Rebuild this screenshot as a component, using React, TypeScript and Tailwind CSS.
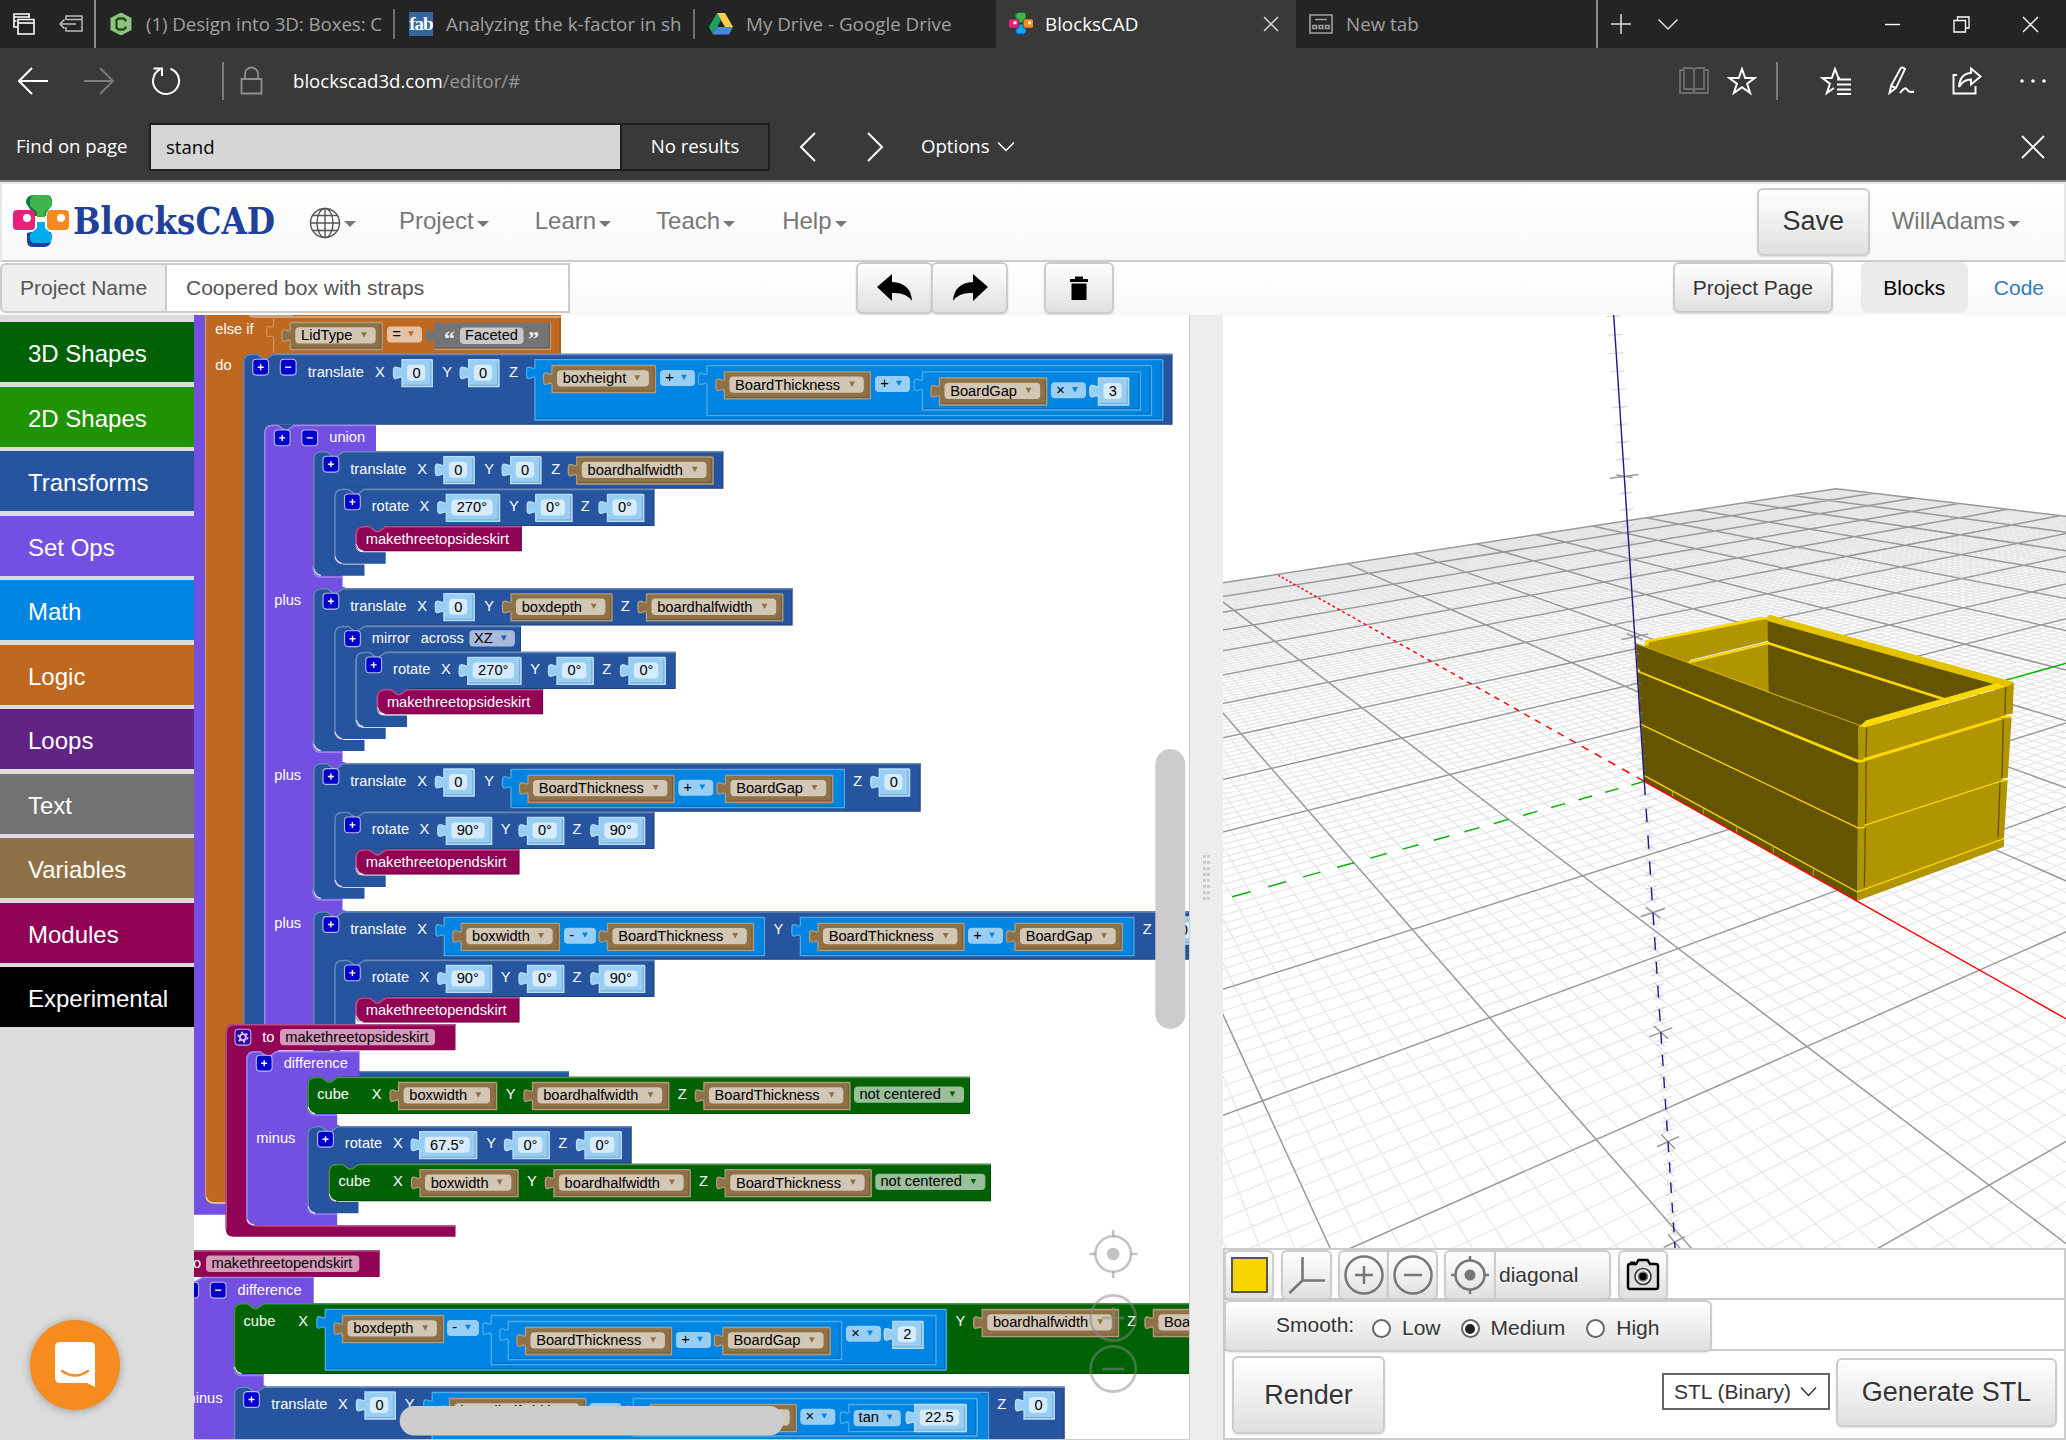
import React from "react";

/* ---------- colours of the block categories ---------- */
const C = {
  green: "#006205",
  blue: "#26549e",
  purple: "#7450e2",
  math: "#0185e3",
  logic: "#bf6920",
  brown: "#8e7147",
  module: "#900355",
  num: "#99cef4",
};
const HI: Record<string, string> = {
  [C.green]: "#4d914f",
  [C.blue]: "#6787bb",
  [C.purple]: "#9d85eb",
  [C.math]: "#4daaeb",
  [C.logic]: "#d39663",
  [C.brown]: "#b09b7e",
  [C.module]: "#b14f88",
  [C.num]: "#b8ddf7",
};
const F = "'Liberation Sans', Arial, sans-serif";

/* ---------- block primitives ---------- */
const T = ({ x, y, t, dark, size = 14.67 }: { x: number; y: number; t: string; dark?: boolean; size?: number }) => (
  <text x={x} y={y} fontSize={size} fontFamily={F} fill={dark ? "#000" : "#fff"}>
    {t}
  </text>
);

const Arrow = ({ x, y, c }: { x: number; y: number; c: string }) => (
  <path d={`M${x - 2.9} ${y - 2.6}h5.8l-2.9 5.4z`} fill={c} />
);

const Stack = ({
  x, y, r, hb, c, tab, foot, fr, col = 21.3,
}: {
  x: number; y: number; r: number; hb: number; c: string; tab?: string;
  foot?: [number, number]; fr?: number; col?: number;
}) => {
  const cr = x + col;
  const lower = foot
    ? `V${hb}H${cr + 8}q-8 0 -8 8V${foot[0] - 8}q0 8 8 8H${fr}V${foot[1]}H${x + 8}q-8 0 -8 -8`
    : `V${hb}H${x + 8}q-8 0 -8 -8`;
  const end = foot ? foot[1] : hb;
  const notch = `H${x + 14}l6.5 4.6h3l6.5 -4.6`;
  return (
    <g>
      {tab && <path d={`M${x} ${y + 8}V${y - 1}H${x + 32}V${y + 5}H${x + 8}z`} fill={tab} />}
      <path d={`M${x} ${y + 8}q0 -8 8 -8${notch}H${r}${lower}V${y + 8}z`} fill={c} />
      <path
        d={`M${x + 0.8} ${end - 7}V${y + 8}q0 -7.2 8 -7.2${notch}H${r}`}
        fill="none" stroke={HI[c]} strokeWidth={1.5}
      />
      <path d={`M${r - 0.5} ${y + 1}V${hb - 0.5}H${foot ? cr + 8 : x + 8}`} fill="none" stroke="#000" strokeOpacity={0.22} />
      <path d={`M${x + 0.8} ${end - 7}q1.500 6 7 6.700`} fill="none" stroke="#fff" strokeOpacity={0.85} strokeWidth={1.3} />
    </g>
  );
};

const Val = ({ x, y, r, b, c, ty = 5 }: { x: number; y: number; r: number; b: number; c: string; ty?: number }) => (
  <g>
    <path
      d={`M${x} ${y}H${r}V${b}H${x}V${y + ty + 14}c-1 -5 -8.5 5 -8.5 -4v-4c0 -8 7.5 0 8.5 -3z`}
      fill={c}
    />
    <path
      d={`M${r} ${y}V${b}H${x}V${y + ty + 14}c-1 -5 -8.5 5 -8.5 -4v-4c0 -8 7.5 0 8.5 -3V${y}H${r}`}
      fill="none" stroke={HI[c]} strokeWidth={1.3}
    />
    <path d={`M${r - 1.5} ${y + 2}V${b - 1.5}H${x + 1}`} fill="none" stroke="#000" strokeOpacity={0.18} />
  </g>
);

const Pill = ({ x, y, w, c, h = 16.3 }: { x: number; y: number; w: number; c: string; h?: number }) => (
  <rect x={x} y={y} width={w} height={h} rx={4} fill={c} />
);

const VAR_W: Record<string, number> = {
  LidType: 92, boxheight: 103.5, BoardThickness: 146, BoardGap: 107.3,
  boardhalfwidth: 136.3, boxdepth: 101, boxwidth: 98,
};
const Var = ({ x, y, n }: { x: number; y: number; n: string }) => {
  const w = VAR_W[n];
  return (
    <g>
      <Val x={x} y={y} r={x + w} b={y + 27} c={C.brown} />
      <Pill x={x + 5} y={y + 4.7} w={w - 11.6} c="#d2c6b5" />
      <T x={x + 10.7} y={y + 17.8} t={n} dark />
      <Arrow x={x + w - 18.3} y={y + 12.4} c={C.brown} />
    </g>
  );
};

const NUM_W: Record<string, number> = { "0": 30.3, "2": 30.3, "3": 30.3, "0°": 36.3, "90°": 45.4, "270°": 53.3, "67.5°": 57, "22.5": 51.5 };
const Num = ({ x, y, v }: { x: number; y: number; v: string }) => (
  <g>
    <Val x={x} y={y} r={x + NUM_W[v]} b={y + 27} c={C.num} />
    <Pill x={x + 5} y={y + 5} w={NUM_W[v] - 12} c="#d6ebfb" h={16} />
    <T x={x + 10.4} y={y + 17.9} t={v} dark />
  </g>
);

const Op = ({ x, y, o, c = C.math, bg = "#99cef4" }: { x: number; y: number; o: string; c?: string; bg?: string }) => {
  const w = o === "-" ? 32 : 35;
  return (
    <g>
      <Pill x={x} y={y} w={w} c={bg} h={16} />
      <T x={x + 5.2} y={y + 12.2} t={o} dark />
      <Arrow x={x + w - 11} y={y + 7.3} c={c} />
    </g>
  );
};

const Btn = ({ x, y, s = "+" }: { x: number; y: number; s?: string }) => (
  <g>
    <rect x={x + 0.3} y={y + 0.3} width={15.8} height={15.8} rx={3.5} fill={s === "*" ? "#3300a8" : "#0000cc"} stroke="#b8b8ea" strokeWidth={1.1} />
    {s === "*" ? (
      <g stroke="#d8c8ee" fill="none">
        <circle cx={x + 8.2} cy={y + 8.2} r={3} strokeWidth={1.8} />
        <circle cx={x + 8.2} cy={y + 8.2} r={4.8} strokeWidth={1.6} strokeDasharray="2.2 2.83" />
      </g>
    ) : (
      <path d={`M${x + 5.2} ${y + 8.2}h6${s === "+" ? `M${x + 8.2} ${y + 5.2}v6` : ""}`} stroke="#fff" strokeWidth={1.4} />
    )}
  </g>
);

const Rotate = ({ x, y, a }: { x: number; y: number; a: [number, string][] }) => (
  <g>
    <Btn x={x + 10} y={y + 5} />
    <T x={x + 37.5} y={y + 22.2} t="rotate" />
    {a.map(([nx, v], i) => (
      <g key={i}>
        <T x={nx - 26.7} y={y + 22.2} t={"XYZ"[i]} />
        <Num x={nx} y={y + 5.7} v={v} />
      </g>
    ))}
  </g>
);

const Call = ({ x, y, n, w }: { x: number; y: number; n: string; w: number }) => (
  <g>
    <Stack x={x} y={y} r={x + w} hb={y + 25.3} c={C.module} tab={C.blue} />
    <T x={x + 10.2} y={y + 18} t={n} />
  </g>
);

const Workspace = () => (
  <svg className="block h-full w-full" viewBox="194 315 996 1125">
    {/* outer if / else-if block */}
    <path d="M194 315H240V1214.700H194z" fill={C.purple} />
    <path d="M205 315H561V353.700H243V1203.500H213q-8 0 -8 -8z" fill={C.logic} />
    <path d="M205.600 315V1196" stroke={HI[C.logic]} strokeWidth={1.3} />
    <path d="M206 1197q2 5.500 7 6H226" stroke="#fff" strokeOpacity={0.7} strokeWidth={1.4} fill="none" />
    <path d="M560 316V353" stroke="#94501a" />
    <path d="M249 315.500q2 1.500 6 1.500H561" stroke="#e2b48b" strokeWidth={1.3} fill="none" />
    <path d="M251 315.500H293" stroke="#a9a2b4" strokeWidth={1} />
    <path d="M273.600 317V325q-1 3 -4 1.500q-3 -1 -3 4v2q0 5 3 4q3 -1 4 1V353" stroke={HI[C.logic]} strokeWidth={1.2} fill="none" />
    <T x={215.3} y={334} t="else if" />
    <T x={215.3} y={370.3} t="do" />
    <Var x={290.3} y={322.5} n="LidType" />
    <Op x={387} y={326.5} o="=" c={C.logic} bg="#e5c3a6" />
    <Val x={434} y={322.5} r={550.6} b={349.3} c="#747474" />
    <path d="M550.600 322.500V349.300H434" fill="none" stroke="#d39663" strokeWidth={1.2} />
    <Pill x={460} y={327.6} w={63.5} c="#c8c8c8" />
    <T x={465} y={340.1} t="Faceted" dark />
    <text x={444} y={346} fontSize={22} fontFamily="'Liberation Serif', serif" fontWeight="bold" fill="#eee">“</text>
    <text x={528} y={346} fontSize={22} fontFamily="'Liberation Serif', serif" fontWeight="bold" fill="#eee">”</text>

    {/* outer translate */}
    <Stack x={243} y={353.7} r={1172.5} hb={424.7} c={C.blue} tab={C.logic} foot={[1090, 1100]} fr={300} />
    <Btn x={252.5} y={359} />
    <Btn x={280} y={359} s="-" />
    <T x={307.7} y={376.5} t="translate" />
    <T x={375} y={376.5} t="X" />
    <Num x={402} y={359.7} v="0" />
    <T x={442.3} y={376.5} t="Y" />
    <Num x={468.7} y={359.7} v="0" />
    <T x={509} y={376.5} t="Z" />
    <Val x={535} y={359.7} r={1162.8} b={420} c={C.math} />
    <Var x={552} y={365.5} n="boxheight" />
    <Op x={660} y={370} o="+" />
    <Val x={707} y={365.7} r={1151.5} b={415.3} c={C.math} />
    <Var x={724.4} y={371.8} n="BoardThickness" />
    <Op x={875} y={376} o="+" />
    <Val x={922.5} y={371.8} r={1140.5} b={410} c={C.math} />
    <Var x={939.5} y={378} n="BoardGap" />
    <Op x={1051} y={382.3} o="×" />
    <Num x={1098.4} y={378} v="3" />

    {/* union */}
    <path d="M264 433V424.700H296V430H278L272 426z" fill={C.blue} />
    <path d="M264 1030V433q0 -8.300 8 -8.300H278l6.500 4.600h3l6.500 -4.600H376V451H342.500V1030H264z" fill={C.purple} />
    <path d="M264.800 1030V433q0 -7.500 8 -7.500H278l6.500 4.600h3l6.500 -4.600H376" fill="none" stroke={HI[C.purple]} strokeWidth={1.5} />
    <Btn x={274} y={429.7} />
    <Btn x={301.5} y={429.7} s="-" />
    <T x={329.3} y={442} t="union" />
    {[576.3, 751.4, 899.3].map((y) => (
      <path key={y} d={`M313 ${y - 10}q0 10.800 8 10.800H342.500`} fill="none" stroke={HI[C.purple]} strokeWidth={1.5} />
    ))}

    {/* union child 1 */}
    <Stack x={313} y={451} r={723.4} hb={488.7} c={C.blue} tab={C.purple} foot={[564.5, 575.7]} fr={364.5} />
    <Btn x={322.7} y={456} />
    <T x={350.3} y={473.6} t="translate" />
    <T x={417.3} y={473.6} t="X" />
    <Num x={443.9} y={456.7} v="0" />
    <T x={484.3} y={473.6} t="Y" />
    <Num x={510.7} y={456.7} v="0" />
    <T x={551.3} y={473.6} t="Z" />
    <Var x={576.8} y={457} n="boardhalfwidth" />
    <Stack x={334.2} y={488.7} r={654.5} hb={526} c={C.blue} tab={C.blue} foot={[552.3, 563.7]} fr={385.7} />
    <Rotate x={334.2} y={488.7} a={[[446.3, "270°"], [535.7, "0°"], [607.5, "0°"]]} />
    <Call x={355.5} y={526} n="makethreetopsideskirt" w={166.4} />

    {/* union child 2 */}
    <T x={274.3} y={605} t="plus" />
    <Stack x={313} y={587.9} r={792.6} hb={625.6} c={C.blue} tab={C.purple} foot={[740, 751]} fr={364.5} />
    <Btn x={322.7} y={593} />
    <T x={350.3} y={610.5} t="translate" />
    <T x={417.3} y={610.5} t="X" />
    <Num x={443.9} y={593.7} v="0" />
    <T x={484.3} y={610.5} t="Y" />
    <Var x={511} y={593.9} n="boxdepth" />
    <T x={620.7} y={610.5} t="Z" />
    <Var x={646.5} y={593.9} n="boardhalfwidth" />
    <Stack x={334.2} y={625.6} r={521} hb={651.7} c={C.blue} tab={C.blue} foot={[727.8, 739]} fr={385.7} />
    <Btn x={344.3} y={630.5} />
    <T x={371.7} y={643} t="mirror" />
    <T x={420.7} y={643} t="across" />
    <Pill x={469.4} y={630.3} w={45.5} c="#a8badb" />
    <T x={474} y={643} t="XZ" dark />
    <Arrow x={503.8} y={638} c={C.blue} />
    <Stack x={355.5} y={651.7} r={675.7} hb={689} c={C.blue} tab={C.blue} foot={[715.5, 727]} fr={407} />
    <Rotate x={355.5} y={651.7} a={[[467.7, "270°"], [557, "0°"], [629, "0°"]]} />
    <Call x={376.7} y={689} n="makethreetopsideskirt" w={166.4} />

    {/* union child 3 */}
    <T x={274.3} y={780} t="plus" />
    <Stack x={313} y={763} r={920.7} hb={811.7} c={C.blue} tab={C.purple} foot={[887.7, 898.7]} fr={364.5} />
    <Btn x={322.7} y={768.3} />
    <T x={350.3} y={785.7} t="translate" />
    <T x={417.3} y={785.7} t="X" />
    <Num x={443.9} y={769} v="0" />
    <T x={484.3} y={785.7} t="Y" />
    <Val x={511} y={769.3} r={844.3} b={807.7} c={C.math} />
    <Var x={528} y={775.3} n="BoardThickness" />
    <Op x={678.3} y={779.7} o="+" />
    <Var x={725.5} y={775.3} n="BoardGap" />
    <T x={853.2} y={785.7} t="Z" />
    <Num x={879.3} y={769} v="0" />
    <Stack x={334.2} y={811.7} r={654.5} hb={849} c={C.blue} tab={C.blue} foot={[875.5, 887]} fr={385.7} />
    <Rotate x={334.2} y={811.7} a={[[446.3, "90°"], [527.5, "0°"], [599.3, "90°"]]} />
    <Call x={355.5} y={849.3} n="makethreetopendskirt" w={164} />

    {/* union child 4 */}
    <T x={274.3} y={928} t="plus" />
    <Stack x={313} y={911.3} r={1240} hb={959.7} c={C.blue} tab={C.purple} foot={[1050, 1060]} fr={330} />
    <Btn x={322.7} y={916.3} />
    <T x={350.3} y={933.9} t="translate" />
    <T x={417.3} y={933.9} t="X" />
    <Val x={444.3} y={917.3} r={764.4} b={955.7} c={C.math} />
    <Var x={461.3} y={923.3} n="boxwidth" />
    <Op x={564} y={927.7} o="-" />
    <Var x={607.5} y={923.3} n="BoardThickness" />
    <T x={773.5} y={933.9} t="Y" />
    <Val x={800.4} y={917.3} r={1133.9} b={955.7} c={C.math} />
    <Var x={818} y={923.3} n="BoardThickness" />
    <Op x={968} y={927.7} o="+" />
    <Var x={1015} y={923.3} n="BoardGap" />
    <T x={1142.7} y={933.9} t="Z" />
    <Num x={1169.4} y={917} v="0" />
    <Stack x={334.2} y={959.7} r={654.5} hb={997} c={C.blue} tab={C.blue} foot={[1050, 1060]} fr={340} />
    <Rotate x={334.2} y={959.7} a={[[446.3, "90°"], [527.5, "0°"], [599.3, "90°"]]} />
    <Call x={355.5} y={997.3} n="makethreetopendskirt" w={164} />
    <path d="M340 1071H569V1078H340z" fill={C.blue} />
    <path d="M340 1071.600H569" stroke={HI[C.blue]} strokeWidth={1.3} />

    {/* module definition 1 */}
    <path d="M225.700 1032q0 -8 8 -8H455.500V1050.300H246.500V1225.500H455.500V1236.700H233.700q-8 0 -8 -8z" fill={C.module} />
    <path d="M226.300 1229V1032q0 -7.300 8 -7.300H455.500" fill="none" stroke={HI[C.module]} strokeWidth={1.5} />
    <Btn x={234.7} y={1029} s="*" />
    <T x={262.3} y={1042.3} t="to" />
    <Pill x={280} y={1029} w={155} c="#d39abb" />
    <T x={285.2} y={1042.3} t="makethreetopsideskirt" dark />
    <path d="M246.200 1050H278V1056H262L246.200 1062z" fill={C.module} />
    <path d="M246 1213V1226H262z" fill={C.module} />
    <path d="M246.200 1059q0 -8 8 -8H260.200l6.500 4.600h3l6.500 -4.600H359.500V1076.500H337.200V1225.500H254.200q-8 0 -8 -8z" fill={C.purple} />
    <path d="M247 1218V1059q0 -7.300 8 -7.300H260.200l6.500 4.600h3l6.500 -4.600H359.500" fill="none" stroke={HI[C.purple]} strokeWidth={1.5} />
    <path d="M254 1226H455.500" stroke={HI[C.module]} strokeWidth={1.3} />
    <path d="M247 1219q1.500 5.500 7 6" fill="none" stroke="#fff" strokeOpacity={0.85} strokeWidth={1.3} />
    <Btn x={256} y={1055} />
    <T x={283.7} y={1068.3} t="difference" />
    <path d="M307.300 1105q0 10.200 8 10.200H337M307.300 1203q0 11 8 11H337" fill="none" stroke={HI[C.purple]} strokeWidth={1.5} />
    <Stack x={307.3} y={1076.7} r={970} hb={1114} c={C.green} tab={C.purple} />
    <T x={317.2} y={1098.9} t="cube" />
    <T x={371.8} y={1098.9} t="X" />
    <Var x={398.6} y={1082.5} n="boxwidth" />
    <T x={505.7} y={1098.9} t="Y" />
    <Var x={532.5} y={1082.5} n="boardhalfwidth" />
    <T x={677.7} y={1098.9} t="Z" />
    <Var x={703.9} y={1082.5} n="BoardThickness" />
    <Pill x={854} y={1086.5} w={110} c="#99bf9b" />
    <T x={859.4} y={1099} t="not centered" dark />
    <Arrow x={952.4} y={1094} c={C.green} />
    <T x={256.3} y={1143} t="minus" />
    <Stack x={307.3} y={1126} r={631.7} hb={1163.7} c={C.blue} tab={C.purple} foot={[1202, 1213.3]} fr={358.5} />
    <Rotate x={307.3} y={1126} a={[[419.7, "67.5°"], [513, "0°"], [585, "0°"]]} />
    <Stack x={328.5} y={1163.7} r={991} hb={1201.3} c={C.green} tab={C.blue} />
    <T x={338.5} y={1186.2} t="cube" />
    <T x={393} y={1186.2} t="X" />
    <Var x={420} y={1169.7} n="boxwidth" />
    <T x={527} y={1186.2} t="Y" />
    <Var x={553.9} y={1169.7} n="boardhalfwidth" />
    <T x={699} y={1186.2} t="Z" />
    <Var x={725.2} y={1169.7} n="BoardThickness" />
    <Pill x={875.3} y={1173.7} w={110} c="#99bf9b" />
    <T x={880.4} y={1186.3} t="not centered" dark />
    <Arrow x={973.4} y={1181.5} c={C.green} />

    {/* module definition 2 */}
    <path d="M194 1250.300H379.700V1277H194z" fill={C.module} />
    <path d="M194 1251H379.700" stroke={HI[C.module]} strokeWidth={1.5} />
    <T x={188.9} y={1268.3} t="to" />
    <Pill x={206} y={1255.6} w={153.3} c="#d39abb" />
    <T x={211.5} y={1268.3} t="makethreetopendskirt" dark />
    <path d="M194 1281h2l6.500 -4H313.700V1303H263.700V1440H194z" fill={C.purple} />
    <path d="M194 1281.500h2l6.500 -4H313.700" stroke={HI[C.purple]} strokeWidth={1.5} fill="none" />
    <Btn x={182.5} y={1282} />
    <Btn x={210} y={1282} s="-" />
    <T x={237.5} y={1295} t="difference" />
    <path d="M233.700 1364q0 11.500 8 11.500H263.700" fill="none" stroke={HI[C.purple]} strokeWidth={1.5} />
    <Stack x={233.7} y={1303} r={1240} hb={1374} c={C.green} tab={C.purple} />
    <T x={243.5} y={1325.9} t="cube" />
    <T x={298.2} y={1325.9} t="X" />
    <Val x={325.3} y={1309.3} r={946.2} b={1370} c={C.math} />
    <Var x={342.5} y={1315.5} n="boxdepth" />
    <Op x={447} y={1320} o="-" />
    <Val x={491.3} y={1315.5} r={935.9} b={1364.7} c={C.math} />
    <Val x={508.3} y={1321.5} r={841.5} b={1359.7} c={C.math} />
    <Var x={525.5} y={1327.5} n="BoardThickness" />
    <Op x={676} y={1332} o="+" />
    <Var x={722.9} y={1327.5} n="BoardGap" />
    <Op x={846} y={1325.7} o="×" />
    <Num x={892.8} y={1321.3} v="2" />
    <T x={955.6} y={1325.9} t="Y" />
    <Var x={982.2} y={1309.5} n="boardhalfwidth" />
    <T x={1127.2} y={1325.9} t="Z" />
    <Var x={1153.4} y={1309.5} n="BoardThickness" />
    <T x={183.5} y={1403.3} t="minus" />
    <Stack x={233.7} y={1386.5} r={1064.7} hb={1460} c={C.blue} tab={C.purple} />
    <Btn x={243.3} y={1391.3} />
    <T x={271.2} y={1408.9} t="translate" />
    <T x={338} y={1408.9} t="X" />
    <Num x={365} y={1392} v="0" />
    <T x={404.7} y={1408.9} t="Y" />
    <Val x={432.2} y={1392.5} r={979.5} b={1450} c={C.math} />
    <Var x={449.5} y={1398.5} n="boardhalfwidth" />
    <Op x={589.3} y={1403} o="-" />
    <Val x={633.3} y={1398.5} r={977.2} b={1436} c={C.math} />
    <path d="M979 1394H987.500V1440H979z" fill={C.math} />
    <path d="M979 1392.500H988.500V1440" fill="none" stroke={HI[C.math]} strokeWidth={1.3} />
    <path d="M979.500 1399V1440" stroke={C.math} strokeWidth={2} />
    <path d="M977.200 1398.500V1436" stroke={HI[C.math]} strokeWidth={1.3} />
    <Var x={650.3} y={1404.5} n="BoardThickness" />
    <Op x={800.3} y={1408.7} o="×" />
    <Val x={848.8} y={1404.5} r={966.3} b={1431.5} c={C.math} />
    <Pill x={853.6} y={1410} w={47.2} c="#99cef4" />
    <T x={858.6} y={1422.3} t="tan" dark />
    <Arrow x={889.7} y={1417} c={C.math} />
    <Num x={914.7} y={1404.5} v="22.5" />
    <T x={997.3} y={1408.9} t="Z" />
    <Num x={1024} y={1392} v="0" />

    {/* zoom controls */}
    <g stroke="#888" strokeOpacity={0.5} strokeWidth={2.6} fill="none">
      <circle cx={1113.2} cy={1254} r={17.8} />
      <circle cx={1113.2} cy={1254} r={6.3} fill="#888" fillOpacity={0.5} stroke="none" />
      <path d="M1113.200 1230v6.500M1113.200 1271.500v6.500M1089.500 1254h6M1131 1254h6.500" />
      <circle cx={1113.2} cy={1318} r={22.6} />
      <path d="M1102 1318h22.500M1113.200 1307v22" />
      <circle cx={1113.2} cy={1369} r={22.6} />
      <path d="M1102 1369h22.500" />
    </g>

    {/* scrollbars */}
    <rect x={1155.3} y={749} width={30} height={280} rx={15} fill="#ccc" />
    <rect x={399.7} y={1406} width={384} height={29.5} rx={14.7} fill="#ccc" />
    <path d="M1189.500 315V1439.500H194" stroke="#ccc" fill="none" />
  </svg>
);

/* ---------- 3D viewer ---------- */
/* camera: homogeneous projection of model units to view pixels */
const wOf = (X: number, Y: number, Z: number) => 1 - 0.01066595 * X + 0.00613036 * Y - 0.00488548 * Z;
const proj = (X: number, Y: number, Z = 0): [number, number] => {
  const w = wOf(X, Y, Z);
  return [
    1644.6 + (7.60142 * X + 12.73622 * Y - 0.90383 * Z - 0.261) / w,
    783 + (4.29441 * X - 3.57568 * Y - 13.75832 * Z - 1.6) / w,
  ];
};
const NEAR = 0.08;
const seg = (a: [number, number], b: [number, number]) => {
  const wa = wOf(a[0], a[1], 0), wb = wOf(b[0], b[1], 0);
  if (wa < NEAR && wb < NEAR) return "";
  if (wa < NEAR || wb < NEAR) {
    const t = (NEAR - wa) / (wb - wa);
    const cut: [number, number] = [a[0] + (b[0] - a[0]) * t, a[1] + (b[1] - a[1]) * t];
    if (wa < NEAR) a = cut;
    else b = cut;
  }
  const p = proj(a[0], a[1]), q = proj(b[0], b[1]);
  return `M${p[0].toFixed(1)} ${p[1].toFixed(1)}L${q[0].toFixed(1)} ${q[1].toFixed(1)}`;
};
const line3 = (a: number[], b: number[]) => {
  const p = proj(a[0], a[1], a[2]), q = proj(b[0], b[1], b[2]);
  return `M${p[0].toFixed(1)} ${p[1].toFixed(1)}L${q[0].toFixed(1)} ${q[1].toFixed(1)}`;
};
const range = (a: number, b: number, s = 1) => Array.from({ length: Math.floor((b - a) / s) + 1 }, (_, i) => a + i * s);
const gridPath = (major: boolean) =>
  range(-100, 100).filter((i) => i !== 0 && (i % 10 === 0) === major)
    .map((i) => seg([i, -100], [i, 100]) + seg([-100, i], [100, i])).join("");
const cross = (z: number, s: number) => line3([-s, 0, z], [s, 0, z]) + line3([0, -s, z], [0, s, z]);

const Viewer = () => (
  <svg className="block h-full w-full" viewBox="1223 315 843 933">
    <path d={gridPath(false)} stroke="#e6e6e6" strokeWidth={1.2} fill="none" />
    <path d={gridPath(true)} stroke="#999" strokeWidth={1.5} fill="none" />
    <path d={range(0, 98, 2).map((i) => seg([-i, 0], [-i - 1, 0])).join("")} stroke="#f00" strokeWidth={1.5} />
    <path d={range(0, 98, 2).map((i) => seg([0, -i], [0, -i - 1])).join("")} stroke="#00b400" strokeWidth={1.5} />
    <path d={seg([0, 0], [0, 100])} stroke="#00b400" strokeWidth={1.5} />
    <path d={range(-40, 30).filter((z) => z % 10 !== 0).map((z) => cross(z, 0.5)).join("")} stroke="#ccc" strokeOpacity={0.7} strokeWidth={1.2} />
    <path d={[-40, -30, -20, -10, 10, 20].map((z) => cross(z, 1)).join("")} stroke="#999" strokeWidth={1.5} />
    <g transform="translate(1625 600) scale(0.33333)" strokeLinecap="butt" fill="none">
      <path d="M62 122L412 52L430 60V280L185 190L60 140z" fill="#b09500" />
      <path d="M428 60L1110 250L960 300L720 370L700 382L430 277z" fill="#665500" />
      <path d="M424 52L435 44L1166 246L1163 343L1130 350L1105 252L428 63z" fill="#e3c200" />
      <path d="M56 134L66 121L412 50L428 57L412 59L72 127L70 138z" fill="#fad800" />
      <path d="M195 182L430 124" stroke="#e8e8e0" strokeWidth={4} />
      <path d="M188 188L430 130" stroke="#fad800" strokeWidth={6} />
      <path d="M428 129L965 300" stroke="#fad800" strokeWidth={8} />
      <path d="M700 378L735 377L1140 262L1166 250L1163 340L1140 346L1160 352L1148 536L1128 540L1148 540L1137 716V740L697 903z" fill="#b09500" />
      <path d="M702 380L724 361L1115 250L1142 259L735 377L722 382z" fill="#fad800" />
      <path d="M33 130L700 378L700 480L697 903L58 545z" fill="#665500" />
      <path d="M33 131L715 380" stroke="#e3c200" strokeWidth={2.5} />
      <path d="M38 206L46 212L40 215z" fill="#fff" />
      <path d="M38 211L700 479L718 479L716 486L698 488L39 217z" fill="#fad800" />
      <path d="M48 373L700 684L718 682M58 527L697 876" stroke="#fad800" strokeWidth={4} />
      <path d="M715 480L1128 355" stroke="#fad800" strokeWidth={9} />
      <path d="M1128 351L1158 350" stroke="#fad800" strokeWidth={7} />
      <path d="M718 676L1126 544L1148 540M697 876L1137 716" stroke="#fad800" strokeWidth={4} />
      <path d="M1142 346L1162 343M1130 537L1150 535" stroke="#fff" strokeWidth={3} />
      <path d="M725 382L723 470M723 486L722 672M721 684L718 862M1142 262L1140 342M1135 360L1131 535M1125 547L1119 712" stroke="#665500" strokeWidth={4} />
      <path d="M143 574V590M235 625V643M335 678V700M445 740V762M565 805V831" stroke="#c9aa00" strokeWidth={3} />
      <path d="M34 159l8 3M38 204l8 3M40 248l8 3M44 293l8 3M46 337l8 3M50 382l8 3M52 424l8 3M54 466l8 3M56 508l8 3" stroke="#8d8255" strokeWidth={3} />
    </g>
    <path d={line3([0, 0, 0], [50, 0, 0])} stroke="#f00" strokeWidth={1.4} />
    <path d={line3([0, 0, 0], [0, 0, 31])} stroke="#1b1b85" strokeWidth={1.4} />
    <path d={range(0, 44, 2).map((i) => line3([0, 0, -i], [0, 0, -i - 1])).join("")} stroke="#1b1b85" strokeWidth={1.4} />
  </svg>
);

/* ---------- chrome ---------- */
const ui = "font-['Open_Sans',sans-serif] whitespace-nowrap";
const sans = "font-['Liberation_Sans',Arial,sans-serif]";
const btn =
  "flex items-center justify-center rounded-[6px] border-2 border-[#ccc] bg-linear-to-b from-white to-[#e0e0e0] text-[#333] shadow-[0_1px_2px_rgba(0,0,0,0.12)] [text-shadow:0_1px_0_#fff]";

const Caret = () => <span className="ml-[3px] mt-[5px] h-0 w-0 border-x-[6px] border-t-[6px] border-x-transparent border-t-[#777]" />;

const BrickLogo = ({ s }: { s: number }) => (
  <svg width={s} height={s} viewBox="0 0 56 52">
    <path d="M13 8q0 -8 8 -8h12q6 0 6 6v4l-6 8v3H20v-2z" fill="#0a7a3c" />
    <path d="M17 6q0 -6 6 -6h10q6 0 6 6v5l-7 6v5h-8v-5l-7 -6z" fill="#3eb54a" />
    <path d="M14 38l4 -1h20v8q0 7 -7 7H20q-6 0 -6 -6z" fill="#21409a" />
    <path d="M24 27h8v6l7 6v4q0 5 -5 5H22q-5 0 -5 -5v-4l7 -6z" fill="#00aeef" />
    <rect x="0" y="15" width="22" height="20" rx="4" fill="#ec1e79" />
    <rect x="34" y="15" width="22" height="20" rx="4" fill="#f6891f" />
    <circle cx="14" cy="23" r="4" fill="#fff" />
    <circle cx="48" cy="23" r="4" fill="#fff" />
  </svg>
);

const TabBar = () => (
  <div className={`flex h-12 bg-[#242424] text-[18.8px] text-[#a0a0a0] ${ui}`}>
    <div className="flex w-[96px] items-center border-r-2 border-[#8a8a8a] pl-3">
      <svg width="24" height="24" viewBox="0 0 24 24" fill="none" stroke="#fff" strokeWidth="1.6">
        <path d="M6 15H2V2h15v4M2 5h15M4.500 9H2" /><path d="M6 7.500h16V22H6z" fill="#242424" /><path d="M6 11h16" />
      </svg>
      <svg className="ml-[22px]" width="26" height="20" viewBox="0 0 26 20" fill="none" stroke="#bbb" strokeWidth="1.5">
        <path d="M8 6V2h16v15H8v-4M8 5.500h16M18 10H2M6.500 5.500L2 10l4.500 4.500" />
      </svg>
    </div>
    <div className="flex w-[297px] items-center pl-[13px]">
      <svg width="24" height="24" viewBox="0 0 24 24">
        <path d="M12 0.500L22.500 6v12L12 23.500L1.500 18V6z" fill="#8cc57c" />
        <path d="M16.500 9.500V8l-2 -1.500h-5L7.500 8v8l2 1.500h5l2 -1.500v-1.500" fill="none" stroke="#2e4a2c" strokeWidth="2.4" />
      </svg>
      <span className="ml-[13px] tracking-[-0.1px]">(1) Design into 3D: Boxes: C</span>
    </div>
    <div className="my-[9px] w-[2px] bg-[#6e6e6e]" />
    <div className="flex w-[298px] items-center pl-[14px]">
      <span className="flex h-6 w-6 items-center justify-center bg-[#3467a0] font-['Liberation_Serif',serif] text-[19px] font-bold tracking-[-1px] text-white">
        fab
      </span>
      <span className="ml-[13px]">Analyzing the k-factor in sh</span>
    </div>
    <div className="my-[9px] w-[2px] bg-[#6e6e6e]" />
    <div className="flex w-[301px] items-center pl-[14px]">
      <svg width="24" height="22" viewBox="0 0 24 22">
        <path d="M8 0h8l8 14h-8z" fill="#ffcf48" /><path d="M8 0l4 7.200L4 21.500L0 14z" fill="#1aa15f" /><path d="M8 14h16l-4 7.500H4z" fill="#4a86f0" />
      </svg>
      <span className="ml-[13px]">My Drive - Google Drive</span>
    </div>
    <div className="flex w-[300px] items-center bg-[#393939] pl-[13px] text-white">
      <BrickLogo s={24} />
      <span className="ml-[12px]">BlocksCAD</span>
      <svg className="ml-auto mr-[17px]" width="16" height="16" viewBox="0 0 16 16" stroke="#ddd" strokeWidth="1.4"><path d="M1 1l14 14M15 1L1 15" /></svg>
    </div>
    <div className="flex w-[302px] items-center border-r-2 border-[#8a8a8a] pl-[13px]">
      <svg width="24" height="20" viewBox="0 0 24 20" fill="none" stroke="#a0a0a0" strokeWidth="1.6">
        <path d="M1 1h22v18H1zM6 5.500h12M4 11.500h3.500v3H4zM10.200 11.500h3.500v3h-3.500zM16.500 11.500H20v3h-3.500z" />
      </svg>
      <span className="ml-[13px]">New tab</span>
    </div>
    <svg className="mt-3 ml-[11px]" width="24" height="24" viewBox="0 0 24 24" stroke="#ddd" strokeWidth="1.5"><path d="M12 2v20M2 12h20" /></svg>
    <svg className="mt-3 ml-[24px]" width="22" height="24" viewBox="0 0 22 24" stroke="#ddd" strokeWidth="1.5" fill="none"><path d="M1.500 7.500L11 17l9.500 -9.500" /></svg>
    <div className="ml-auto flex items-center gap-[52px] pr-[27px]">
      <svg width="17" height="17" viewBox="0 0 17 17" stroke="#fff" strokeWidth="1.4"><path d="M1 8.500h15" /></svg>
      <svg width="17" height="17" viewBox="0 0 17 17" stroke="#fff" strokeWidth="1.3" fill="none"><path d="M1 4.500h11.500V16H1zM4.500 4.500V1H16v11h-3.500" /></svg>
      <svg width="17" height="17" viewBox="0 0 17 17" stroke="#fff" strokeWidth="1.3"><path d="M1 1l15 15M16 1L1 16" /></svg>
    </div>
  </div>
);

const NavBar = () => (
  <div className={`flex h-[66px] items-center text-[18.6px] ${ui}`}>
    <svg className="ml-[18px]" width="30" height="28" viewBox="0 0 30 28" stroke="#fff" strokeWidth="2" fill="none"><path d="M30 14H1M14 1L1 14l13 13" /></svg>
    <svg className="ml-[36px]" width="30" height="28" viewBox="0 0 30 28" stroke="#7d7d7d" strokeWidth="1.8" fill="none"><path d="M0 14h29M16 1l13 13l-13 13" /></svg>
    <svg className="ml-[36px]" width="32" height="32" viewBox="0 0 32 32" stroke="#fff" strokeWidth="2" fill="none">
      <path d="M20.500 3.700A13 13 0 1 1 10 4.400M3.500 3.500H12V11" />
    </svg>
    <div className="ml-[40px] h-[38px] w-[2px] bg-[#7a7a7a]" />
    <svg className="ml-[16px]" width="24" height="30" viewBox="0 0 24 30" stroke="#8f8f8f" strokeWidth="1.8" fill="none"><path d="M1.500 13h20v14.500h-20zM5 13V8a6.500 6.500 0 0 1 13 0v5" /></svg>
    <span className="ml-[29px] text-white">blockscad3d.com<span className="text-[#979797]">/editor/#</span></span>
    <div className="ml-auto flex items-center">
      <svg width="30" height="30" viewBox="0 0 30 30" stroke="#6c6c6c" strokeWidth="1.8" fill="none"><path d="M4.500 4H1v23h28V4h-3.500M5 2h7q3 0 3 3q0 -3 3 -3h7v21h-7q-3 0 -3 3q0 -3 -3 -3H5zM15 5v20" /></svg>
      <svg className="ml-[18px]" width="30" height="30" viewBox="0 0 30 30" stroke="#fff" strokeWidth="2" fill="none"><path d="M15 3l3.200 9h9.600l-7.700 5.700l3 9.300l-8.100 -5.700l-8.100 5.700l3 -9.300l-7.700 -5.700h9.600z" /></svg>
      <div className="ml-[19px] h-[38px] w-[2px] bg-[#7a7a7a]" />
      <svg className="ml-[42px]" width="32" height="30" viewBox="0 0 32 30" stroke="#fff" strokeWidth="2" fill="none"><path d="M20 12l-1.500 0L15 3l-3.200 9H2.200l7.700 5.700l-3 9.300l7 -5M17 13.500h14M17 18.500h14M17 23.500h14M17 28h14" /></svg>
      <svg className="ml-[36px]" width="28" height="30" viewBox="0 0 28 30" stroke="#fff" strokeWidth="1.9" fill="none"><path d="M3 20L12.500 2.500q2 -2 4.500 0.500l-9 19l-6.500 5zM3 20l5 2M12 27q5 -7 7 -3.500t7 2" /></svg>
      <svg className="ml-[36px]" width="30" height="30" viewBox="0 0 30 30" stroke="#fff" strokeWidth="1.9" fill="none"><path d="M5 9H1.500v18.500h22V20M19 2.500l9.500 8L19 18.500v-5q-8 0 -12 7.500q1 -13.500 12 -14z" /></svg>
      <svg className="mr-[19px] ml-[37px]" width="28" height="6" viewBox="0 0 28 6" fill="#fff"><circle cx="3" cy="3" r="1.800" /><circle cx="14" cy="3" r="1.800" /><circle cx="25" cy="3" r="1.800" /></svg>
    </div>
  </div>
);

const FindBar = () => (
  <div className={`flex h-[66px] items-center text-[18.6px] text-white ${ui}`}>
    <span className="ml-4 w-[133px] pb-[3px]">Find on page</span>
    <div className="flex h-12 w-[621px] border-2 border-[#1f1f1f]">
      <div className="flex w-[469px] items-center bg-[#d6d6d6] pl-[15px] text-black">stand</div>
      <div className="flex flex-1 items-center justify-center border-l-2 border-[#1f1f1f] pb-[3px]">No results</div>
    </div>
    <svg className="ml-[28px]" width="20" height="32" viewBox="0 0 20 32" stroke="#fff" strokeWidth="2" fill="none"><path d="M17 2L3 16l14 14" /></svg>
    <svg className="ml-[47px]" width="20" height="32" viewBox="0 0 20 32" stroke="#fff" strokeWidth="2" fill="none"><path d="M3 2l14 14L3 30" /></svg>
    <span className="ml-[36px] pb-[3px]">Options</span>
    <svg className="ml-[7px]" width="18" height="12" viewBox="0 0 18 12" stroke="#fff" strokeWidth="1.5" fill="none"><path d="M1 1.500l8 8l8 -8" /></svg>
    <svg className="mr-[21px] ml-auto" width="24" height="24" viewBox="0 0 24 24" stroke="#fff" strokeWidth="1.8"><path d="M1 1l22 22M23 1L1 23" /></svg>
  </div>
);

const Header = () => (
  <div className={`flex h-[80px] items-center border-x-2 border-t-2 border-b-2 border-x-[#e7e7e7] border-t-[#e7e7e7] border-b-[#ccc] bg-linear-to-b from-white to-[#f8f8f8] pb-[2px] text-[24px] text-[#777] ${sans}`}>
    <div className="ml-[11px] flex w-[296px] items-center">
      <BrickLogo s={56} />
      <svg className="ml-[3px] overflow-visible" width="206" height="46" viewBox="0 0 206 46">
        <text x="1" y="36" fontFamily="'DejaVu Serif', serif" fontWeight="bold" fontSize="38" fill="#21409a" textLength="202" lengthAdjust="spacingAndGlyphs">BlocksCAD</text>
      </svg>
    </div>
    <svg className="mt-[3px]" width="32" height="32" viewBox="0 0 32 32" stroke="#555" strokeWidth="1.4" fill="none">
      <circle cx="16" cy="16" r="14.500" /><ellipse cx="16" cy="16" rx="8" ry="14.500" /><path d="M16 1.500v29M1.500 16h29M4 8.500h24M4 23.500h24" />
    </svg>
    <Caret />
    <span className="ml-[43px]">Project</span><Caret />
    <span className="ml-[46px]">Learn</span><Caret />
    <span className="ml-[45px]">Teach</span><Caret />
    <span className="ml-[47px]">Help</span><Caret />
    <div className={`${btn} mt-[2px] ml-auto h-[68px] w-[113px] pb-[2px] text-[27px]`}>Save</div>
    <span className="ml-[22px]">WillAdams</span>
    <div className="mr-[44px] flex"><Caret /></div>
  </div>
);

const ToolBar = () => (
  <div className={`flex h-[53px] bg-linear-to-b from-white to-[#f8f8f8] text-[21px] ${sans}`}>
    <div className="mt-px flex h-[50px] w-[167px] items-center rounded-l-[6px] border-2 border-[#ccc] bg-[#eee] pl-[18px] text-[#555]">Project Name</div>
    <div className="mt-px flex h-[50px] w-[403px] items-center border-y-2 border-r-2 border-[#ccc] bg-white pl-[19px] text-[#555]">Coopered box with straps</div>
    <div className="ml-[286px] flex">
      <div className={`${btn} h-[52px] w-[77px]`}>
        <svg width="38" height="30" viewBox="0 0 38 30"><path d="M1 14L16 1v8q19 1 20 19q-6 -9 -20 -8v8z" fill="#000" /></svg>
      </div>
      <div className={`${btn} -ml-[2px] h-[52px] w-[77px]`}>
        <svg width="38" height="30" viewBox="0 0 38 30"><path d="M37 14L22 1v8q-19 1 -20 19q6 -9 20 -8v8z" fill="#000" /></svg>
      </div>
    </div>
    <div className={`${btn} ml-[36px] h-[52px] w-[70px]`}>
      <svg width="20" height="26" viewBox="0 0 20 26"><path d="M6 1.500h8V4h5v3H1V4h5zM2.500 8.500h15V25h-15z" fill="#000" /></svg>
    </div>
    <div className={`${btn} ml-auto h-[51px] w-[160px]`}>Project Page</div>
    <div className="ml-[28px] flex h-[51px] w-[107px] items-center justify-center rounded-[6px] bg-[#ebebeb] text-black">Blocks</div>
    <div className="mr-[22px] ml-[26px] flex h-[51px] items-center text-[#337ab7]">Code</div>
  </div>
);

const Item = ({ label, cls }: { label: string; cls: string }) => (
  <div className={`flex h-[60px] items-center pt-[4px] pl-[28px] text-[24px] text-white ${cls}`}>{label}</div>
);

const Sidebar = () => (
  <div className={`relative flex w-[194px] flex-col gap-[4.5px] bg-[#dcdcdc] pt-[7px] ${sans}`}>
    <Item label="3D Shapes" cls="bg-[#006205]" />
    <Item label="2D Shapes" cls="bg-[#209303]" />
    <Item label="Transforms" cls="bg-[#26549e]" />
    <Item label="Set Ops" cls="bg-[#7450e2]" />
    <Item label="Math" cls="bg-[#0185e3]" />
    <Item label="Logic" cls="bg-[#bf6920]" />
    <Item label="Loops" cls="bg-[#612485]" />
    <Item label="Text" cls="bg-[#727272]" />
    <Item label="Variables" cls="bg-[#8e7147]" />
    <Item label="Modules" cls="bg-[#900355]" />
    <Item label="Experimental" cls="bg-black" />
    <div className="absolute bottom-[30px] left-[30px] flex h-[90px] w-[90px] items-center justify-center rounded-full bg-[#f68b1f] shadow-[0_1px_8px_rgba(0,0,0,0.3)]">
      <svg width="44" height="48" viewBox="0 0 44 48"><path d="M7 1h30q5 0 5 5v40l-8 -4H7q-5 0 -5 -5V6q0 -5 5 -5z" fill="#fff" /><path d="M9 30q13 9 26 0" stroke="#f68b1f" strokeWidth="2.500" fill="none" strokeLinecap="round" /></svg>
    </div>
  </div>
);

const Radio = ({ label, on }: { label: string; on?: boolean }) => (
  <>
    <span className="mt-[5px] flex h-[19px] w-[19px] items-center justify-center rounded-full border-2 border-[#666] bg-white">
      {on && <span className="h-[10px] w-[10px] rounded-full bg-[#222]" />}
    </span>
    <span className="mt-[3px] ml-[11px]">{label}</span>
  </>
);

const Panel = () => (
  <div className={`flex h-[192px] flex-col border-2 border-[#ccc] bg-white text-[21px] ${sans}`}>
    <div className="flex h-[50px] border-b-2 border-[#ccc]">
      <div className={`${btn} -ml-px h-[50px] w-[50px]`}><div className="h-[36px] w-[37px] border-2 border-[#555] bg-[#fad500]" /></div>
      <div className={`${btn} ml-[7px] h-[50px] w-[51px]`}>
        <svg width="38" height="38" viewBox="0 0 38 38" stroke="#777" strokeWidth="2.600" fill="none"><path d="M14.500 1v23.500L1.500 37M14.500 24.500H37" /></svg>
      </div>
      <div className={`${btn} ml-[6px] h-[50px] w-[51px] rounded-r-none`}>
        <svg width="40" height="40" viewBox="0 0 40 40" stroke="#777" strokeWidth="2.500" fill="none"><circle cx="20" cy="20" r="18.500" /><path d="M11 20h18M20 11v18" /></svg>
      </div>
      <div className={`${btn} -ml-[2px] h-[50px] w-[51px] rounded-l-none`}>
        <svg width="40" height="40" viewBox="0 0 40 40" stroke="#777" strokeWidth="2.500" fill="none"><circle cx="20" cy="20" r="18.500" /><path d="M11 20h18" /></svg>
      </div>
      <div className={`${btn} ml-[6px] h-[50px] w-[52px] rounded-r-none`}>
        <svg width="40" height="40" viewBox="0 0 40 40" stroke="#777" strokeWidth="2.500" fill="none"><circle cx="20" cy="20" r="14.500" /><circle cx="20" cy="20" r="5.500" fill="#777" stroke="none" /><path d="M20 1v5M20 34v5M1 20h5M34 20h5" /></svg>
      </div>
      <div className={`${btn} -ml-[2px] h-[50px] w-[117px] justify-start rounded-l-none pl-[3px]`}>diagonal</div>
      <div className={`${btn} ml-[7px] h-[50px] w-[50px]`}>
        <svg width="34" height="34" viewBox="0 0 34 34"><path d="M2 8q0 -2 2 -2h6l2.500 -4h9L24 6h6q2 0 2 2v21q0 2 -2 2H4q-2 0 -2 -2z" fill="#ddd" stroke="#000" strokeWidth="2.400" /><path d="M4 3.500h5v3H4z" fill="#000" /><circle cx="17" cy="18.500" r="8" fill="#eee" stroke="#333" strokeWidth="1.600" /><circle cx="17" cy="18.500" r="4.500" fill="#000" stroke="#777" strokeWidth="1.500" /></svg>
      </div>
    </div>
    <div className="flex h-[51px] border-b-2 border-[#ccc] text-[#333]">
      <div className={`${btn} -ml-px h-[52px] w-[488px] justify-start pl-[50px]`}>
        <span className="-mt-[2px] w-[96px]">Smooth:</span>
        <Radio label="Low" />
        <span className="w-[20px]" />
        <Radio label="Medium" on />
        <span className="w-[21px]" />
        <Radio label="High" />
      </div>
    </div>
    <div className="flex flex-1 items-start">
      <div className={`${btn} mt-[5px] ml-[7px] h-[78px] w-[153px] text-[27px]`}>Render</div>
      <div className="mt-[22px] ml-auto flex h-[37px] w-[168px] items-center border-2 border-[#666] bg-white pl-[10px] text-[#333]">
        STL (Binary)
        <svg className="ml-[9px]" width="17" height="12" viewBox="0 0 17 12" stroke="#333" strokeWidth="1.500" fill="none"><path d="M1 1.500l7.500 8l7.500 -8" /></svg>
      </div>
      <div className={`${btn} mt-[7px] mr-[7px] ml-[6px] h-[69px] w-[221px] text-[27px]`}>Generate STL</div>
    </div>
  </div>
);

export default function App() {
  return (
    <div className="flex h-[1440px] w-[2066px] flex-col overflow-hidden bg-white">
      <div className="flex h-[182px] flex-none flex-col border-b-2 border-[#888] bg-[#393939]">
        <TabBar />
        <NavBar />
        <FindBar />
      </div>
      <Header />
      <ToolBar />
      <div className="flex min-h-0 flex-1">
        <Sidebar />
        <div className="w-[996px] overflow-hidden"><Workspace /></div>
        <div className="flex w-[33px] flex-col items-center bg-[#ededed] pt-[540px]">
          <div className="grid grid-cols-2 gap-x-[1px] gap-y-[3px]">
            {Array.from({ length: 16 }, (_, i) => <span key={i} className="h-[3px] w-[3px] bg-[#ccc]" />)}
          </div>
        </div>
        <div className="flex w-[843px] flex-col">
          <div className="min-h-0 flex-1 overflow-hidden"><Viewer /></div>
          <Panel />
        </div>
      </div>
    </div>
  );
}
